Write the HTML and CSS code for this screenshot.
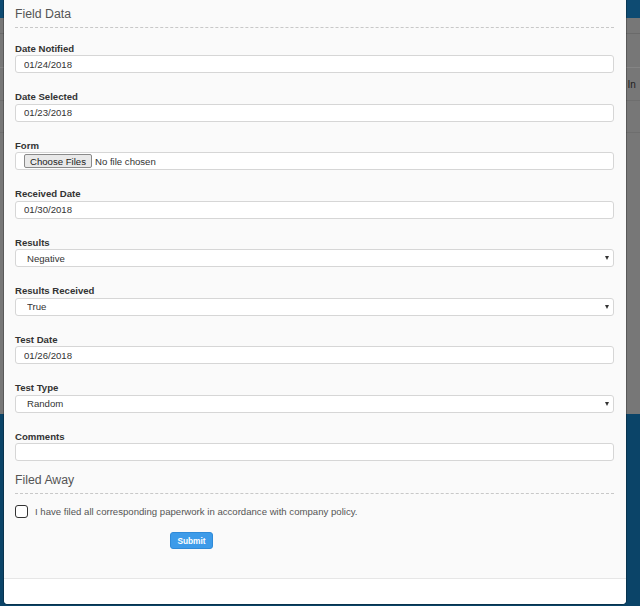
FILE: index.html
```html
<!DOCTYPE html>
<html>
<head>
<meta charset="utf-8">
<title>Field Data</title>
<link rel="stylesheet" href="styles.css">
</head>
<body>
<div class="app">
  <div class="app-header"></div>
  <div class="app-row r1"></div>
  <div class="app-row r2"></div>
  <div class="app-row r3"><span class="tool">] In</span></div>
  <div class="app-row r4"></div>
  <div class="app-main"></div>
  <div class="app-footer"></div>
</div>

<div class="modal">
  <div class="modal-body">
    <h4 class="section-title">Field Data</h4>
    <div class="fields">
      <div class="group">
        <label class="field-label">Date Notified</label>
        <input class="control" type="text" value="01/24/2018">
      </div>
      <div class="group">
        <label class="field-label">Date Selected</label>
        <input class="control" type="text" value="01/23/2018">
      </div>
      <div class="group">
        <label class="field-label">Form</label>
        <div class="control file-control"><input class="file-input" type="file" multiple></div>
      </div>
      <div class="group">
        <label class="field-label">Received Date</label>
        <input class="control" type="text" value="01/30/2018">
      </div>
      <div class="group">
        <label class="field-label">Results</label>
        <div class="select-wrap">
          <select class="control select"><option>Negative</option><option>Positive</option></select>
        </div>
      </div>
      <div class="group">
        <label class="field-label">Results Received</label>
        <div class="select-wrap">
          <select class="control select"><option>True</option><option>False</option></select>
        </div>
      </div>
      <div class="group">
        <label class="field-label">Test Date</label>
        <input class="control" type="text" value="01/26/2018">
      </div>
      <div class="group">
        <label class="field-label">Test Type</label>
        <div class="select-wrap">
          <select class="control select"><option>Random</option><option>Scheduled</option></select>
        </div>
      </div>
      <div class="group last">
        <label class="field-label">Comments</label>
        <input class="control" type="text" value="">
      </div>
    </div>

    <h4 class="section-title">Filed Away</h4>
    <label class="check-row">
      <input class="check" type="checkbox">
      <span class="check-text">I have filed all corresponding paperwork in accordance with company policy.</span>
    </label>
    <div class="actions">
      <button class="submit" type="button">Submit</button>
    </div>
  </div>
  <div class="modal-footer"></div>
</div>
</body>
</html>
```

FILE: styles.css
```css
html, body {
  margin: 0;
  padding: 0;
}
body {
  width: 640px;
  height: 606px;
  overflow: hidden;
  position: relative;
  font-family: "Liberation Sans", Arial, sans-serif;
  background: #777;
}

/* background application (dimmed by overlay) */
.app {
  display: flex;
  flex-direction: column;
  height: 606px;
}
.app-header {
  height: 18px;
  background: #0e4b72;
}
.app-row {
  background: #777;
  box-sizing: border-box;
}
.r1 { height: 16px; border-bottom: 1px solid #6a6a6a; }
.r2 { height: 34px; border-bottom: 1px solid #848484; }
.r3 {
  height: 33px;
  border-bottom: 1px solid #6e6e6e;
  padding-left: 622px;
  white-space: nowrap;
  font-size: 10px;
  line-height: 33px;
  color: #1e1e1e;
}
.r4 { height: 32px; border-bottom: 1px solid #6e6e6e; }
.app-main {
  height: 281px;
  background: #777;
}
.app-footer {
  flex: 1;
  background: #0b4468;
}

/* modal dialog overlay */
.modal {
  position: absolute;
  top: 0;
  left: 4px;
  width: 622px;
  height: 604px;
  display: flex;
  flex-direction: column;
  background: #fafafa;
  border-radius: 0 0 4px 4px;
  box-shadow: 0 0 0 1px rgba(0, 0, 0, 0.25);
}
.modal-body {
  height: 578px;
  box-sizing: border-box;
  padding: 6px 12px 0 11px;
}
.modal-footer {
  flex: 1;
  background: #fff;
  border-top: 1px solid #e6e6e6;
  border-radius: 0 0 4px 4px;
}

.section-title {
  margin: 0;
  font-size: 12.3px;
  font-weight: normal;
  line-height: 16px;
  color: #555;
  padding-bottom: 5px;
  border-bottom: 1px dashed #c8c8c8;
}

.fields {
  margin-top: 13.5px;
}
.group {
  margin-bottom: 17px;
}
.group.last {
  margin-bottom: 11px;
}
.field-label {
  display: block;
  font-size: 9.6px;
  font-weight: bold;
  line-height: 13px;
  margin-bottom: 0.5px;
  color: #333;
}
.control {
  display: block;
  width: 100%;
  height: 18px;
  box-sizing: border-box;
  margin: 0;
  padding: 0 8px;
  border: 1px solid #d6d6d6;
  border-radius: 3px;
  background: #fff;
  font-family: "Liberation Sans", Arial, sans-serif;
  font-size: 9.6px;
  color: #333;
  outline: none;
}

.file-control {
  display: flex;
  align-items: center;
}
.file-input {
  font-family: "Liberation Sans", Arial, sans-serif;
  font-size: 9.6px;
  color: #333;
  margin: 0;
  padding: 0;
}
.file-input::file-selector-button {
  font-family: "Liberation Sans", Arial, sans-serif;
  font-size: 9.6px;
  color: #222;
  height: 14px;
  padding: 0 5px;
  margin: 0 3px 0 0;
  border: 1px solid #8a8a8a;
  border-radius: 2px;
  background: #e9e9e9;
}

.select-wrap {
  position: relative;
}
.select {
  -webkit-appearance: none;
  appearance: none;
  padding-left: 11px;
}
.select-wrap::after {
  content: "";
  position: absolute;
  right: 5px;
  top: 7px;
  border-left: 2.5px solid transparent;
  border-right: 2.5px solid transparent;
  border-top: 4px solid #333;
  pointer-events: none;
}

.check-row {
  display: flex;
  align-items: center;
  gap: 7px;
  margin-top: 11px;
  height: 13px;
}
.check {
  -webkit-appearance: none;
  appearance: none;
  width: 13px;
  height: 13px;
  margin: 0;
  box-sizing: border-box;
  border: 1.5px solid #333;
  border-radius: 3px;
  background: #fff;
}
.check-text {
  font-size: 9.6px;
  line-height: 13px;
  color: #555;
}

.actions {
  margin-top: 14px;
  padding-left: 155px;
}
.submit {
  display: block;
  width: 43px;
  height: 17px;
  padding: 0;
  border: 1px solid #2f8ad8;
  border-radius: 3px;
  background: #3d9be9;
  color: #fff;
  font-family: "Liberation Sans", Arial, sans-serif;
  font-size: 8.3px;
  font-weight: bold;
}
```
